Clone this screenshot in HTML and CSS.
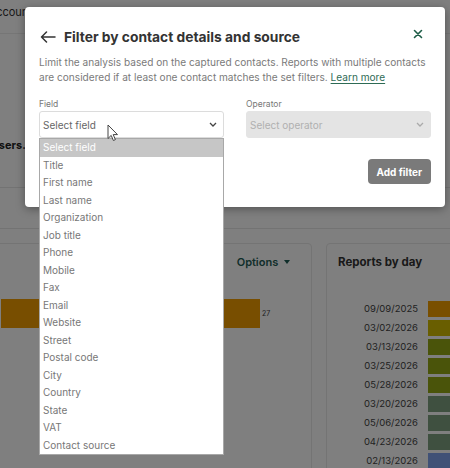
FILE: index.html
```html
<!DOCTYPE html>
<html>
<head>
<meta charset="utf-8">
<link rel="stylesheet" href="styles.css">
</head>
<body>
<div class="page">
  <div class="topbar"><span class="crumb">account</span></div>
  <div class="subheader"><span class="users">users.</span></div>
  <div class="tabs"></div>
  <div class="content">
    <div class="card card-left">
      <div class="card-head"><span class="options">Options <span class="caret"></span></span></div>
      <div class="hbar-row"><div class="hbar" style="width:259px"></div><span class="hbar-val">27</span></div>
    </div>
    <div class="card card-right">
      <div class="card-title">Reports by day</div>
      <div class="days">
        <div class="day"><span class="date">09/09/2025</span><span class="dbar c1"></span></div>
        <div class="day"><span class="date">03/02/2026</span><span class="dbar c2"></span></div>
        <div class="day"><span class="date">03/13/2026</span><span class="dbar c3"></span></div>
        <div class="day"><span class="date">03/25/2026</span><span class="dbar c3"></span></div>
        <div class="day"><span class="date">05/28/2026</span><span class="dbar c3"></span></div>
        <div class="day"><span class="date">03/20/2026</span><span class="dbar c4"></span></div>
        <div class="day"><span class="date">05/06/2026</span><span class="dbar c4"></span></div>
        <div class="day"><span class="date">04/23/2026</span><span class="dbar c4"></span></div>
        <div class="day"><span class="date">02/13/2026</span><span class="dbar c5"></span></div>
      </div>
    </div>
  </div>
</div>
<div class="overlay"></div>
<div class="modal">
  <div class="modal-head">
    <svg class="back" width="16" height="12" viewBox="0 0 16 12"><path d="M15 6H1.5M6.5 1L1.5 6l5 5" fill="none" stroke="#333" stroke-width="1.5" stroke-linecap="round" stroke-linejoin="round"/></svg>
    <h2 class="title">Filter by contact details and source</h2>
    <svg class="close" width="10" height="10" viewBox="0 0 10 10"><path d="M1.5 1.5l7 7M8.5 1.5l-7 7" stroke="#1d5c47" stroke-width="1.6" stroke-linecap="round"/></svg>
  </div>
  <p class="desc">Limit the analysis based on the captured contacts. Reports with multiple contacts are considered if at least one contact matches the set filters. <a class="link">Learn more</a></p>
  <div class="fields">
    <div class="fgroup">
      <label class="flabel">Field</label>
      <div class="select"><span>Select field</span><svg class="chev" width="8" height="5" viewBox="0 0 8 5"><path d="M1 1l3 3 3-3" fill="none" stroke="#444" stroke-width="1.3"/></svg></div>
    </div>
    <div class="fgroup">
      <label class="flabel">Operator</label>
      <div class="select disabled"><span>Select operator</span><svg class="chev" width="8" height="5" viewBox="0 0 8 5"><path d="M1 1l3 3 3-3" fill="none" stroke="#aaa" stroke-width="1.3"/></svg></div>
    </div>
  </div>
  <div class="actions"><button class="btn">Add filter</button></div>
</div>
<ul class="dropdown">
  <li class="sel">Select field</li>
  <li>Title</li>
  <li>First name</li>
  <li>Last name</li>
  <li>Organization</li>
  <li>Job title</li>
  <li>Phone</li>
  <li>Mobile</li>
  <li>Fax</li>
  <li>Email</li>
  <li>Website</li>
  <li>Street</li>
  <li>Postal code</li>
  <li>City</li>
  <li>Country</li>
  <li>State</li>
  <li>VAT</li>
  <li>Contact source</li>
</ul>
<svg class="cursor" width="12" height="18" viewBox="0 0 12 18"><path d="M1 1v13.5l3.2-3.1 2.2 5.1 2-0.9-2.2-5h4.3z" fill="#fff" stroke="#444" stroke-width="1" stroke-linejoin="round"/></svg>
</body>
</html>
```
FILE: styles.css
```css
html, body { margin: 0; padding: 0; }
body {
  width: 450px; height: 468px; overflow: hidden; position: relative;
  font-family: Inter, "Noto Sans", sans-serif; background: #fff; color: #333;
}
.page { width: 450px; }
.topbar { height: 33px; border-bottom: 1px solid #ececec; }
.crumb { display: block; margin-left: -10px; padding-top: 5px; font-size: 11px; color: #333; line-height: 14px; }
.subheader { height: 153px; border-bottom: 1px solid #e6e6e6; display: flex; align-items: flex-end; }
.users { margin-left: -8px; margin-bottom: 35px; font-size: 11px; font-weight: 700; color: #222; }
.tabs { height: 40px; border-bottom: 1px solid #e6e6e6; }
.content { display: flex; gap: 14px; padding-top: 14px; margin-left: -20px; }
.card { border: 1px solid #e8e8e8; border-radius: 4px; height: 260px; flex: none; }
.card-left { width: 330px; }
.card-right { width: 160px; padding-left: 11px; box-sizing: border-box; }
.card-head { display: flex; justify-content: flex-end; padding: 11px 21px 0 0; height: 24px; }
.options { font-size: 11px; font-weight: 600; color: #1f5c55; line-height: 14px; }
.caret { display: inline-block; width: 0; height: 0; border-left: 3.5px solid transparent; border-right: 3.5px solid transparent; border-top: 4px solid #1f5c55; vertical-align: middle; margin-left: 3px; margin-top: -2px; }
.hbar-row { display: flex; align-items: center; margin-top: 20px; }
.hbar { height: 29px; background: #f09c00; margin-left: 20px; }
.hbar-val { font-size: 7px; color: #444; margin-left: 2px; }
.card-title { font-size: 11.5px; font-weight: 700; color: #333; padding-top: 11px; line-height: 14px; }
.days { margin-top: 30px; }
.day { display: flex; align-items: center; height: 19px; }
.date { width: 80px; text-align: right; font-size: 9.5px; color: #444; }
.dbar { display: block; width: 40px; height: 16px; margin-left: 10px; }
.c1 { background: #f29e00; }
.c2 { background: #d2bc00; }
.c3 { background: #94a814; }
.c4 { background: #7ea080; }
.c5 { background: #80a2ec; }

.overlay { position: absolute; inset: 0; background: rgba(0,0,0,0.5); }

.modal {
  position: absolute; left: 25px; top: 7px; width: 420px; box-sizing: border-box;
  background: #fff; border-radius: 4px; padding: 20px 14px 23px 14px;
  box-shadow: 0 2px 10px rgba(0,0,0,0.35);
}
.modal-head { display: flex; align-items: center; height: 20px; padding-right: 8px; }
.back { margin-left: 1px; margin-right: 8px; }
.title { margin: 0; flex: 1; font-size: 13.8px; font-weight: 700; color: #333; letter-spacing: 0; }
.close { margin-top: -6px; }
.desc { margin: 8px 0 0 0; font-size: 10.1px; line-height: 15px; color: #7a7a7a; }
.link { color: #2e6b55; text-decoration: underline; text-underline-offset: 2px; }
.fields { display: flex; gap: 22px; margin-top: 13px; }
.fgroup { flex: 1; display: flex; flex-direction: column; }
.flabel { font-size: 8.5px; color: #777; line-height: 12px; margin-bottom: 1px; }
.select {
  height: 27px; box-sizing: border-box; border: 1px solid #dcdcdc; border-radius: 3px;
  display: flex; align-items: center; justify-content: space-between; padding: 0 6px 0 3px;
  font-size: 10px; color: #666;
}
.select.disabled { background: #e4e4e4; border-color: #e4e4e4; color: #b0b0b0; padding-left: 3px; }
.actions { display: flex; justify-content: flex-end; margin-top: 21px; }
.btn {
  height: 25px; padding: 0 9px; border: 0; border-radius: 4px; background: #7a7a7a;
  color: #fff; font-family: Inter, sans-serif; font-weight: 700; font-size: 10px;
}
.dropdown {
  position: absolute; left: 39px; top: 138px; width: 185px; box-sizing: border-box;
  margin: 0; padding: 0; list-style: none; background: #fff; border: 1px solid #a8a8a8;
}
.dropdown li { height: 17.5px; line-height: 17.5px; padding-left: 3px; font-size: 10px; color: #777; }
.dropdown li.sel { background: #c6c6c6; color: #fff; }
.cursor { position: absolute; left: 107px; top: 124px; }
```
